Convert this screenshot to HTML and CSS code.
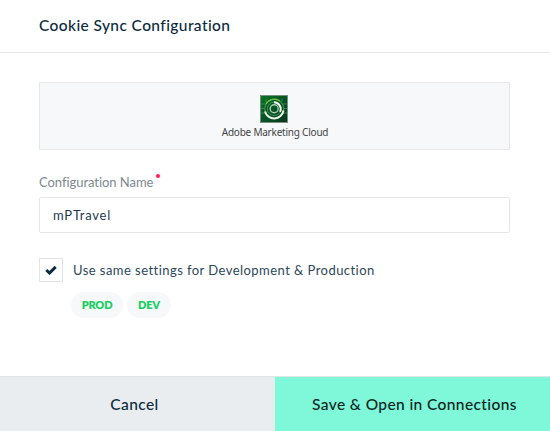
FILE: index.html
```html
<!DOCTYPE html>
<html lang="en">
<head>
<meta charset="utf-8">
<title>Cookie Sync Configuration</title>
<link rel="stylesheet" href="styles.css">
</head>
<body>
<form class="dialog">
  <header class="header"><h1 class="title">Cookie Sync Configuration</h1></header>
  <main class="content">
    <div class="provider">
      <svg class="logo" viewBox="0 0 28 28" aria-hidden="true">
        <defs><linearGradient id="tile" x1="0" y1="0" x2="1" y2="1"><stop offset="0" stop-color="#087325"/><stop offset=".5" stop-color="#075426"/><stop offset="1" stop-color="#06371e"/></linearGradient></defs>
        <rect width="28" height="28" fill="#79907f"/>
        <rect x="1" y="1" width="26" height="26" fill="url(#tile)"/>
        <g fill="none">
          <path d="M1 9h5M1 13.5h3M1 18h5M22 9h5M24 13.5h3M22 18h5M6 4v3M22 4v3" stroke="#4d905d" stroke-width=".7"/>
          <circle cx="14.2" cy="13.8" r="9.5" stroke="#4d995b" stroke-width="1"/>
          <path d="M6 9a9.5 9.5 0 0 1 14-3" stroke="#70c63e" stroke-width="1.3"/>
          <path d="M5 16.5a9.5 9.5 0 0 0 18.5-1" stroke="#e8f4e9" stroke-width="2"/>
          <circle cx="14.2" cy="13.8" r="6.8" stroke="#3f9150" stroke-width="1"/>
          <path d="M14 7.2a6.7 6.7 0 0 1 6 9.7" stroke="#f3faf3" stroke-width="1.9"/>
          <circle cx="14.2" cy="13.8" r="4" stroke="#a8cfad" stroke-width="1.4"/>
        </g>
      </svg>
      <span class="provider-name">Adobe Marketing Cloud</span>
    </div>
    <label class="label" for="name"><span class="label-text">Configuration Name</span><span class="required"></span></label>
    <input class="input" id="name" type="text" value="mPTravel">
    <div class="option">
      <span class="checkbox" role="checkbox" aria-checked="true" aria-label="Use same settings">
        <svg class="check" viewBox="0 0 12 10" aria-hidden="true"><path d="M1.3 5 4.5 8.1 10.7 1.9" fill="none" stroke="#0b2b40" stroke-width="2.9"/></svg>
      </span>
      <span class="option-text">Use same settings for Development &amp; Production</span>
    </div>
    <div class="tags"><span class="tag"><span class="prod">PROD</span></span><span class="tag"><span class="dev">DEV</span></span></div>
  </main>
  <footer class="actions">
    <button class="button cancel" type="button"><span>Cancel</span></button>
    <button class="button save" type="button"><span>Save &amp; Open in Connections</span></button>
  </footer>
</form>
</body>
</html>
```
FILE: styles.css
```css
* { box-sizing: border-box; }
body { margin: 0; background: #fff; color: #0b2b40; font-family: Lato, "Liberation Sans", sans-serif; font-variant-ligatures: none; }
.dialog { display: flex; flex-direction: column; height: 431px; overflow: hidden; }
.header { height: 53px; padding: 14px 39px 0; border-bottom: 1px solid #e6e7e8; }
.title { margin: 0; font-size: 15.5px; line-height: 22px; font-weight: 500; letter-spacing: .4px; white-space: nowrap; }
.content { flex: 1; padding: 29px 40px 0 39px; }
.provider { height: 68px; padding: 12px 1px 0 0; border: 1px solid #e5e7e9; background: #f6f8fa; display: flex; flex-direction: column; align-items: center; }
.logo { width: 28px; height: 28px; flex: none; }
.provider-name { margin: 2px 0 0 2px; font: 10px/15px "Noto Sans", sans-serif; letter-spacing: -.22px; color: #444; white-space: nowrap; }
.label { display: flex; height: 47px; padding-top: 22px; color: #7c898f; font-size: 13px; line-height: 20px; }
.label-text { letter-spacing: -.05px; white-space: nowrap; }
.required { width: 4px; height: 4px; margin: 2px 0 0 3px; border-radius: 50%; background: #ff1b55; }
.input { display: block; width: 100%; height: 36px; padding: 0 13px; border: 1px solid #e4e6e8; border-radius: 2px; background: #fff; color: #1e3b4e; font: 13px/20px Lato, sans-serif; letter-spacing: .75px; outline: 0; }
.option { display: flex; align-items: center; height: 24px; margin-top: 25px; }
.checkbox { display: flex; align-items: center; justify-content: center; width: 24px; height: 24px; border: 1px solid #e1e4e6; }
.check { width: 12px; height: 10px; }
.option-text { margin-left: 10px; color: #2c4859; font-size: 13px; line-height: 20px; letter-spacing: .45px; white-space: nowrap; }
.tags { display: flex; gap: 4px; margin: 10px 0 0 32px; }
.tag { display: flex; align-items: center; justify-content: center; width: 52px; height: 26px; border-radius: 13px; background: #f6f8fa; color: #16cf60; font-size: 11px; line-height: 26px; font-weight: 800; letter-spacing: -.2px; }
.tag:last-child { width: 44px; }
.actions { display: grid; grid-template-columns: 1fr 1fr; height: 55px; border-top: 1px solid #e2e5e7; }
.button { padding: 0; border: 0; color: #0b2b40; font: 500 15.5px/22px Lato, sans-serif; letter-spacing: .4px; white-space: nowrap; }
.cancel { background: #e9edf0; padding-right: 6px; }
.save { background: #7ff7d9; color: #092521; padding-left: 4px; }
```
